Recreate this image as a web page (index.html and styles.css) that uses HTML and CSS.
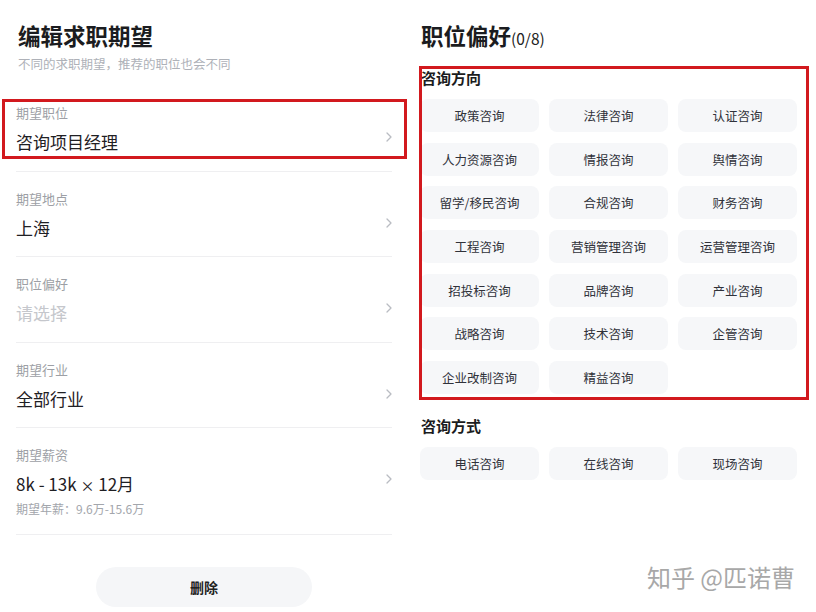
FILE: index.html
```html
<!DOCTYPE html>
<html lang="zh-CN">
<head>
<meta charset="utf-8">
<title>编辑求职期望</title>
<link rel="stylesheet" href="styles.css">
</head>
<body>
<div class="page">
  <div class="left">
    <div class="head">
      <h1 class="title">编辑求职期望</h1>
      <p class="subtitle">不同的求职期望，推荐的职位也会不同</p>
    </div>
    <div class="row marked">
      <div class="label">期望职位</div>
      <div class="value-line"><span class="value">咨询项目经理</span><svg class="chev" width="6" height="10" viewBox="0 0 6 10"><polyline points="1,1 5,5 1,9" fill="none" stroke="#b9bcc2" stroke-width="1.3" stroke-linecap="round" stroke-linejoin="round"/></svg></div>
    </div>
    <div class="row">
      <div class="label">期望地点</div>
      <div class="value-line"><span class="value">上海</span><svg class="chev" width="6" height="10" viewBox="0 0 6 10"><polyline points="1,1 5,5 1,9" fill="none" stroke="#b9bcc2" stroke-width="1.3" stroke-linecap="round" stroke-linejoin="round"/></svg></div>
    </div>
    <div class="row">
      <div class="label">职位偏好</div>
      <div class="value-line"><span class="value placeholder">请选择</span><svg class="chev" width="6" height="10" viewBox="0 0 6 10"><polyline points="1,1 5,5 1,9" fill="none" stroke="#b9bcc2" stroke-width="1.3" stroke-linecap="round" stroke-linejoin="round"/></svg></div>
    </div>
    <div class="row">
      <div class="label">期望行业</div>
      <div class="value-line"><span class="value">全部行业</span><svg class="chev" width="6" height="10" viewBox="0 0 6 10"><polyline points="1,1 5,5 1,9" fill="none" stroke="#b9bcc2" stroke-width="1.3" stroke-linecap="round" stroke-linejoin="round"/></svg></div>
    </div>
    <div class="row salary">
      <div class="label">期望薪资</div>
      <div class="value-line"><span class="value">8k - 13k <span class="times">×</span> 12月</span><svg class="chev" width="6" height="10" viewBox="0 0 6 10"><polyline points="1,1 5,5 1,9" fill="none" stroke="#b9bcc2" stroke-width="1.3" stroke-linecap="round" stroke-linejoin="round"/></svg></div>
      <div class="sub">期望年薪：9.6万-15.6万</div>
    </div>
    <div class="btn-wrap"><button class="btn">删除</button></div>
  </div>

  <div class="right">
    <h2 class="rtitle">职位偏好<span class="count">(0/8)</span></h2>
    <section class="group marked-group">
      <h3 class="gtitle">咨询方向</h3>
      <div class="chips">
        <div class="chip">政策咨询</div>
        <div class="chip">法律咨询</div>
        <div class="chip">认证咨询</div>
        <div class="chip">人力资源咨询</div>
        <div class="chip">情报咨询</div>
        <div class="chip">舆情咨询</div>
        <div class="chip">留学/移民咨询</div>
        <div class="chip">合规咨询</div>
        <div class="chip">财务咨询</div>
        <div class="chip">工程咨询</div>
        <div class="chip">营销管理咨询</div>
        <div class="chip">运营管理咨询</div>
        <div class="chip">招投标咨询</div>
        <div class="chip">品牌咨询</div>
        <div class="chip">产业咨询</div>
        <div class="chip">战略咨询</div>
        <div class="chip">技术咨询</div>
        <div class="chip">企管咨询</div>
        <div class="chip">企业改制咨询</div>
        <div class="chip">精益咨询</div>
      </div>
    </section>
    <section class="group second">
      <h3 class="gtitle">咨询方式</h3>
      <div class="chips">
        <div class="chip">电话咨询</div>
        <div class="chip">在线咨询</div>
        <div class="chip">现场咨询</div>
      </div>
    </section>
    <div class="watermark">知乎 @匹诺曹</div>
  </div>
</div>
</body>
</html>
```

FILE: styles.css
```css
*, *::before, *::after { box-sizing: border-box; }
html, body {
  margin: 0;
  padding: 0;
  background: #ffffff;
  font-family: "Noto Sans CJK SC", "Noto Sans", sans-serif;
  color: #222;
}
.page {
  display: flex;
  width: 816px;
  height: 612px;
  overflow: hidden;
}
.left {
  width: 408px;
  padding: 0 16px;
  display: flex;
  flex-direction: column;
}
.head { padding-left: 2px; }
.title {
  margin: 20px 0 0;
  font-size: 22.5px;
  line-height: 30px;
  font-weight: 700;
  color: #1b1c20;
}
.subtitle {
  margin: 6px 0 0;
  font-size: 12.5px;
  line-height: 16px;
  color: #aeb1b8;
}
.row {
  position: relative;
  border-bottom: 1px solid #efeff1;
  padding: 18px 0 16.5px;
}
.head + .row { margin-top: 14px; }
.label {
  font-size: 13px;
  line-height: 18px;
  color: #9d9fa5;
}
.value-line {
  margin-top: 8px;
  display: flex;
  align-items: center;
  justify-content: space-between;
  height: 24px;
}
.value {
  font-size: 17px;
  line-height: 24px;
  color: #1f2024;
}
.times { font-size: 14px; }
.value.placeholder { color: #c5c7cc; }
.chev {
  margin-bottom: 10px;
}
.salary { padding-bottom: 17px; }
.sub {
  margin-top: 5px;
  font-size: 12px;
  line-height: 16px;
  color: #a3a6ac;
}
.marked::after {
  content: "";
  position: absolute;
  top: 13px;
  left: -14px;
  width: 405px;
  height: 60px;
  border: 3px solid #d2191e;
}
.btn-wrap {
  display: flex;
  justify-content: center;
  margin-top: 32px;
}
.btn {
  width: 216px;
  height: 40px;
  border: none;
  border-radius: 20px;
  background: #f5f6f8;
  font-family: inherit;
  font-size: 14px;
  font-weight: 700;
  color: #222;
}

.right {
  width: 396px;
  margin-left: 12px;
  display: flex;
  flex-direction: column;
}
.rtitle {
  margin: 20px 0 0 1px;
  height: 30px;
  font-size: 22.5px;
  line-height: 30px;
  font-weight: 700;
  color: #1b1c20;
}
.count {
  font-size: 15.5px;
  line-height: 1;
  font-weight: 400;
  color: #222;
}
.group { position: relative; }
.marked-group { margin-top: 18px; }
.marked-group::after {
  content: "";
  position: absolute;
  top: -2px;
  left: -1px;
  width: 390px;
  height: 334px;
  border: 3px solid #d2191e;
}
.gtitle {
  margin: 0 0 0 1px;
  font-size: 15px;
  line-height: 20px;
  font-weight: 700;
  color: #1b1c20;
}
.chips {
  margin-top: 11px;
  display: grid;
  grid-template-columns: repeat(3, 119px);
  grid-auto-rows: 33px;
  column-gap: 10px;
  row-gap: 10.67px;
}
.chip {
  background: #f6f7f9;
  border-radius: 8px;
  display: flex;
  align-items: center;
  justify-content: center;
  font-size: 12.5px;
  color: #30323a;
}
.second { margin-top: 22px; }
.watermark {
  margin-top: 82px;
  margin-right: 21px;
  text-align: right;
  font-size: 24px;
  line-height: 30px;
  color: #a8a8a8;
  text-shadow: 0 0 2px #fff, 1px 1px 0 #fff, -1px -1px 0 #fff;
}
```
